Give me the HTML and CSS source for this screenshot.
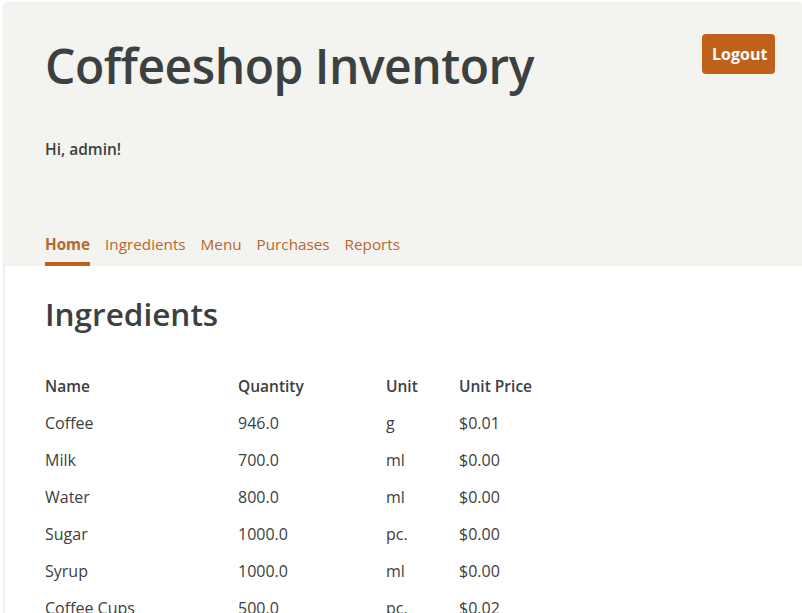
FILE: index.html
```html
<!DOCTYPE html>
<html>
<head>
<meta charset="utf-8">
<title>Coffeeshop Inventory</title>
<link rel="stylesheet" href="styles.css">
</head>
<body>
<div class="page">
  <header class="header">
    <div class="top">
      <h1 class="title">Coffeeshop Inventory</h1>
      <button class="logout">Logout</button>
    </div>
    <p class="greet">Hi, admin!</p>
    <nav class="nav">
      <a class="nav-link active">Home</a>
      <a class="nav-link">Ingredients</a>
      <a class="nav-link">Menu</a>
      <a class="nav-link">Purchases</a>
      <a class="nav-link">Reports</a>
    </nav>
  </header>
  <main class="content">
    <h2 class="heading">Ingredients</h2>
    <table class="table">
      <thead>
        <tr><th class="c-name">Name</th><th class="c-qty">Quantity</th><th class="c-unit">Unit</th><th>Unit Price</th></tr>
      </thead>
      <tbody>
        <tr><td>Coffee</td><td>946.0</td><td>g</td><td>$0.01</td></tr>
        <tr><td>Milk</td><td>700.0</td><td>ml</td><td>$0.00</td></tr>
        <tr><td>Water</td><td>800.0</td><td>ml</td><td>$0.00</td></tr>
        <tr><td>Sugar</td><td>1000.0</td><td>pc.</td><td>$0.00</td></tr>
        <tr><td>Syrup</td><td>1000.0</td><td>ml</td><td>$0.00</td></tr>
        <tr><td>Coffee Cups</td><td>500.0</td><td>pc.</td><td>$0.02</td></tr>
      </tbody>
    </table>
  </main>
</div>
</body>
</html>
```
FILE: styles.css
```css
html, body {
  margin: 0;
  padding: 0;
  background: #ffffff;
  overflow: hidden;
}
body {
  font-family: "Open Sans", "Noto Sans", sans-serif;
  color: #3c4040;
}
.page {
  margin: 4px 0 0 5px;
  box-shadow: 0 0 4px rgba(0,0,0,0.18);
  min-height: 700px;
  background: #fff;
}
.header {
  background: #f3f3ef;
  padding: 0 0 0 40px;
}
.top {
  display: flex;
  justify-content: space-between;
  align-items: flex-start;
  padding-right: 27px;
}
.title {
  margin: 0;
  padding-top: 30px;
  font-size: 48px;
  font-weight: 600;
  line-height: 64px;
  letter-spacing: -0.5px;
  color: #3c4040;
}
.logout {
  margin-top: 30px;
  background: #c0611b;
  color: #fff;
  border: none;
  border-radius: 4px;
  font-family: inherit;
  font-weight: 700;
  font-size: 16px;
  padding: 0 10px;
  height: 40px;
  width: 73px;
}
.greet {
  margin: 39px 0 0 0;
  font-size: 15.5px;
  font-weight: 600;
  line-height: 24px;
}
.nav {
  display: flex;
  gap: 15px;
  margin-top: 71px;
}
.nav-link {
  font-size: 15.25px;
  color: #b9672c;
  line-height: 24px;
  padding-bottom: 6px;
  border-bottom: 4px solid transparent;
}
.nav-link.active {
  font-weight: 700;
  border-bottom-color: #c0611b;
}
.content {
  padding: 20px 40px;
}
.heading {
  margin: 6px 0 0 0;
  font-size: 31.5px;
  font-weight: 600;
  line-height: 44px;
}
.table {
  margin-top: 31px;
  border-collapse: collapse;
  font-size: 16px;
}
.table th {
  text-align: left;
  font-weight: 600;
  font-size: 15.5px;
  height: 37px;
  padding: 0;
}
.table td {
  height: 37px;
  padding: 0;
  font-weight: 400;
}
.c-name { width: 193px; }
.c-qty { width: 148px; }
.c-unit { width: 73px; }
```
